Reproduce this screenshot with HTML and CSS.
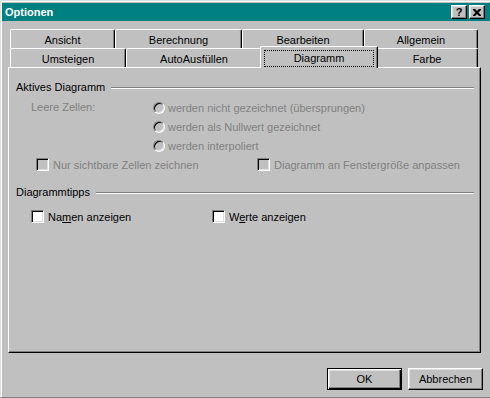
FILE: index.html
```html
<!DOCTYPE html>
<html lang="de">
<head>
    <meta charset="UTF-8">
    <title>Optionen</title>
    <link rel="stylesheet" href="styles.css">
</head>
<body>
    <div class="window">
        <div class="caption">
            <span class="caption-title">Optionen</span>
            <div class="caption-buttons">
                <span class="cap-btn help">?</span>
                <span class="cap-btn close">
                    <svg width="8" height="7" viewBox="0 0 8 7">
                        <path d="M0 0h2l2 2 2-2h2v1L5.5 3.5 8 6v1H6L4 5 2 7H0V6l2.5-2.5L0 1z" fill="#000"/>
                    </svg>
                </span>
            </div>
        </div>

        <div class="tabs">
            <div class="tab-row">
                <div class="tab t-ansicht">Ansicht</div>
                <div class="tab t-berechnung">Berechnung</div>
                <div class="tab t-bearbeiten">Bearbeiten</div>
                <div class="tab t-allgemein">Allgemein</div>
            </div>
            <div class="tab-row">
                <div class="tab t-umsteigen">Umsteigen</div>
                <div class="tab t-auto">AutoAusfüllen</div>
                <div class="tab t-diagramm active"><span class="focus">Diagramm</span></div>
                <div class="tab t-farbe">Farbe</div>
            </div>
        </div>

        <div class="panel">
            <div class="group-title">Aktives Diagramm</div>

            <div class="cells disabled">
                <div class="cells-label">Leere Zellen:</div>
                <div class="radio-list">
                    <div class="option"><span class="radio"></span><span>werden nicht gezeichnet (übersprungen)</span></div>
                    <div class="option"><span class="radio"></span><span>werden als Nullwert gezeichnet</span></div>
                    <div class="option"><span class="radio"></span><span>werden interpoliert</span></div>
                </div>
            </div>

            <div class="check-row disabled first-row">
                <div class="option"><span class="check"></span><span>Nur sichtbare Zellen zeichnen</span></div>
                <div class="option"><span class="check"></span><span>Diagramm an Fenstergröße anpassen</span></div>
            </div>

            <div class="group-title tips-title">Diagrammtipps</div>

            <div class="check-row tips-row">
                <div class="option"><span class="check"></span><span>Na<u>m</u>en anzeigen</span></div>
                <div class="option"><span class="check"></span><span>W<u>e</u>rte anzeigen</span></div>
            </div>
        </div>

        <div class="footer">
            <button class="btn default">OK</button>
            <button class="btn">Abbrechen</button>
        </div>
    </div>
</body>
</html>
```

FILE: styles.css
```css
body {
    margin: 0;
    background-color: #c0c0c0;
    font-family: "Liberation Sans", Arial, sans-serif;
    font-size: 11px;
    color: #000;
    overflow: hidden;
}
.window {
    box-sizing: border-box;
    width: 490px;
    height: 398px;
    border-top: 1px solid #dfdfdf;
    border-left: 1px solid #dfdfdf;
    border-bottom: 1px solid #808080;
    padding: 2px 0 0 1px;
    box-shadow: inset 1px 1px #fff;
}

/* title bar */
.caption {
    height: 18px;
    background-color: #008080;
    display: flex;
    align-items: center;
    justify-content: space-between;
    padding: 0 5px 0 3px;
}
.caption-title {
    color: #fff;
    font-weight: bold;
}
.caption-buttons {
    display: flex;
    gap: 2px;
}
.cap-btn {
    box-sizing: border-box;
    width: 16px;
    height: 14px;
    background-color: #c0c0c0;
    border: 1px solid;
    border-color: #fff #000 #000 #fff;
    box-shadow: inset -1px -1px #808080, inset 1px 1px #dfdfdf;
    display: flex;
    align-items: center;
    justify-content: center;
}
.help {
    font-weight: bold;
    font-size: 11px;
    line-height: 12px;
}

/* tabs */
.tabs {
    margin: 8px 0 0 8px;
    width: 468px;
}
.tab-row {
    display: flex;
    height: 19px;
}
.tab {
    box-sizing: border-box;
    height: 19px;
    border-top: 1px solid #fff;
    border-left: 1px solid #fff;
    border-right: 1px solid #000;
    border-radius: 2px 2px 0 0;
    box-shadow: inset -1px 0 #808080;
    background-color: #c0c0c0;
    text-align: center;
    padding-top: 3px;
    line-height: 14px;
}
.t-ansicht { width: 105px; }
.t-berechnung { width: 127px; }
.t-bearbeiten { width: 122px; }
.t-allgemein { width: 114px; }
.t-umsteigen { width: 116px; }
.t-auto { width: 136px; }
.t-diagramm { width: 114px; }
.t-farbe { width: 102px; }
.tab.active {
    width: 118px;
    height: 22px;
    margin: -2px -2px 0;
    padding: 3px 3px 0;
    position: relative;
    z-index: 1;
}
.focus {
    display: block;
    border: 1px dotted #000;
    line-height: 15px;
}

/* page */
.panel {
    box-sizing: border-box;
    margin-left: 6px;
    width: 473px;
    height: 286px;
    border: 1px solid;
    border-color: #fff #000 #000 #fff;
    box-shadow: inset -1px -1px #808080;
    padding: 12px 6px 0 7px;
}
.group-title {
    display: flex;
    align-items: center;
    gap: 6px;
    line-height: 14px;
}
.group-title::after {
    content: "";
    flex: 1;
    margin-top: 2px;
    border-top: 1px solid #808080;
    border-bottom: 1px solid #fff;
}
.tips-title {
    margin-top: 11px;
}
.disabled {
    color: #808080;
}
.cells {
    display: flex;
    margin: 4px 0 0 15px;
}
.cells-label {
    width: 122px;
    line-height: 19px;
}
.option {
    display: flex;
    align-items: center;
    gap: 3px;
    height: 19px;
    white-space: nowrap;
}
.check-row {
    display: flex;
}
.first-row {
    margin-left: 20px;
}
.first-row .option:first-child {
    width: 221px;
}
.tips-row {
    margin: 8px 0 0 15px;
}
.tips-row .option:first-child {
    width: 181px;
}
.check-row .option {
    gap: 4px;
}
.radio {
    box-sizing: border-box;
    width: 12px;
    height: 12px;
    border-radius: 50%;
    border: 1px solid;
    border-color: #808080 #fff #fff #808080;
    box-shadow: inset 1px 1px #000, inset -1px -1px #dfdfdf;
    background-color: #c0c0c0;
}
.check {
    box-sizing: border-box;
    width: 13px;
    height: 13px;
    border: 1px solid;
    border-color: #808080 #fff #fff #808080;
    box-shadow: inset 1px 1px #000, inset -1px -1px #dfdfdf;
    background-color: #fff;
}
.disabled .check {
    background-color: #c0c0c0;
}

/* buttons */
.footer {
    display: flex;
    justify-content: flex-end;
    gap: 6px;
    margin-top: 15px;
    padding-right: 7px;
}
.btn {
    box-sizing: border-box;
    width: 75px;
    height: 22px;
    font-family: inherit;
    font-size: 11px;
    color: #000;
    background-color: #c0c0c0;
    border: 1px solid;
    border-color: #fff #000 #000 #fff;
    box-shadow: inset -1px -1px #808080, inset 1px 1px #dfdfdf;
    padding: 0;
}
.btn.default {
    border: 1px solid #000;
    box-shadow: inset 1px 1px #fff, inset -1px -1px #000, inset -2px -2px #808080, inset 2px 2px #dfdfdf;
}
```
